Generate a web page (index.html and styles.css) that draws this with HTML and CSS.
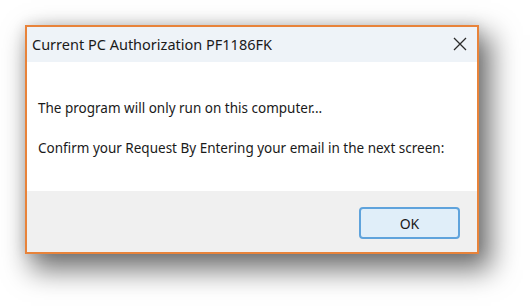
FILE: index.html
```html
<!DOCTYPE html>
<html lang="en">
<head>
<meta charset="utf-8">
<title>Current PC Authorization</title>
<link rel="stylesheet" href="styles.css">
</head>
<body>
<div class="dialog">
  <div class="titlebar">
    <span class="title">Current PC Authorization PF1186FK</span>
    <span class="close" aria-label="Close">
      <svg width="14" height="14" viewBox="0 0 14 14"><path d="M1 1 L13 13 M13 1 L1 13" stroke="#2b2b2b" stroke-width="1.3" fill="none"/></svg>
    </span>
  </div>
  <div class="content">
    <p class="line">The program will only run on this computer...</p>
    <p class="line">Confirm your Request By Entering your email in the next screen:</p>
  </div>
  <div class="footer">
    <button class="ok">OK</button>
  </div>
</div>
</body>
</html>
```

FILE: styles.css
```css
html, body {
  margin: 0;
  padding: 0;
  background: #ffffff;
}
body {
  padding: 25px 0 0 25px;
  min-height: 306px;
  box-sizing: border-box;
  font-family: "Noto Sans", "Open Sans", sans-serif;
  color: #1a1a1a;
}
.dialog {
  width: 450px;
  border: 2px solid #e8833a;
  background: #ffffff;
  box-shadow: 9px 13px 26px 3px rgba(0, 0, 0, 0.55), 0 0 12px rgba(0, 0, 0, 0.12);
}
.titlebar {
  height: 35px;
  background: #eef3f8;
  display: flex;
  align-items: center;
  justify-content: space-between;
  padding: 0 10px 0 5px;
}
.title {
  font-size: 14.5px;
  color: #1a1a1a;
  margin-top: -1px;
}
.close {
  display: flex;
  width: 14px;
  height: 14px;
  margin-top: -1px;
}
.content {
  height: 129px;
  padding: 36px 0 0 11px;
  box-sizing: border-box;
  display: flex;
  flex-direction: column;
  gap: 20px;
}
.line {
  margin: 0;
  font-size: 13.5px;
  line-height: 20px;
  color: #1a1a1a;
}
.footer {
  height: 61px;
  background: #f0f0f0;
  display: flex;
  justify-content: flex-end;
  align-items: flex-start;
  padding: 16px 17px 0 0;
  box-sizing: border-box;
}
.ok {
  width: 101px;
  height: 32px;
  background: #e0eef9;
  border: 2px solid #5fa3dc;
  border-radius: 4px;
  font-family: "Noto Sans", "Open Sans", sans-serif;
  font-size: 14px;
  color: #1a1a1a;
  padding: 0;
}
```
